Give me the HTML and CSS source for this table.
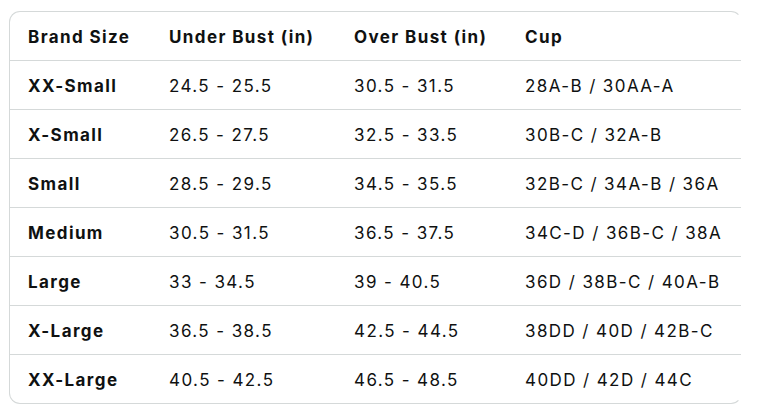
FILE: index.html
```html
<!DOCTYPE html>
<html>
<head>
<meta charset="utf-8">
<link rel="stylesheet" href="styles.css">
</head>
<body>
<div class="table">
  <div class="row head">
    <div class="cell">Brand Size</div>
    <div class="cell">Under Bust (in)</div>
    <div class="cell">Over Bust (in)</div>
    <div class="cell">Cup</div>
  </div>
  <div class="row">
    <div class="cell name">XX-Small</div>
    <div class="cell">24.5 - 25.5</div>
    <div class="cell">30.5 - 31.5</div>
    <div class="cell">28A-B / 30AA-A</div>
  </div>
  <div class="row">
    <div class="cell name">X-Small</div>
    <div class="cell">26.5 - 27.5</div>
    <div class="cell">32.5 - 33.5</div>
    <div class="cell">30B-C / 32A-B</div>
  </div>
  <div class="row">
    <div class="cell name">Small</div>
    <div class="cell">28.5 - 29.5</div>
    <div class="cell">34.5 - 35.5</div>
    <div class="cell">32B-C / 34A-B / 36A</div>
  </div>
  <div class="row">
    <div class="cell name">Medium</div>
    <div class="cell">30.5 - 31.5</div>
    <div class="cell">36.5 - 37.5</div>
    <div class="cell">34C-D / 36B-C / 38A</div>
  </div>
  <div class="row">
    <div class="cell name">Large</div>
    <div class="cell">33 - 34.5</div>
    <div class="cell">39 - 40.5</div>
    <div class="cell">36D / 38B-C / 40A-B</div>
  </div>
  <div class="row">
    <div class="cell name">X-Large</div>
    <div class="cell">36.5 - 38.5</div>
    <div class="cell">42.5 - 44.5</div>
    <div class="cell">38DD / 40D / 42B-C</div>
  </div>
  <div class="row last">
    <div class="cell name">XX-Large</div>
    <div class="cell">40.5 - 42.5</div>
    <div class="cell">46.5 - 48.5</div>
    <div class="cell">40DD / 42D / 44C</div>
  </div>
</div>
</body>
</html>
```
FILE: styles.css
```css
html, body {
  margin: 0;
  background: #ffffff;
}
body {
  padding: 11px 0 0 9px;
  font-family: Inter, "Noto Sans", "Liberation Sans", sans-serif;
  font-size: 17px;
  letter-spacing: 1.4px;
  color: #0f1111;
}
.table {
  width: 731px;
  border: 1px solid #d5d9d9;
  border-right-color: transparent;
  border-radius: 11px;
  overflow: hidden;
}
.row {
  display: grid;
  grid-template-columns: 141px 185px 171px 1fr;
  height: 48px;
  align-items: center;
  border-bottom: 1px solid #d5d9d9;
}
.row.last {
  border-bottom: none;
}
.cell {
  padding: 2px 0 0 18px;
  white-space: nowrap;
  line-height: 20px;
}
.head .cell,
.cell.name {
  font-weight: 700;
}
```
